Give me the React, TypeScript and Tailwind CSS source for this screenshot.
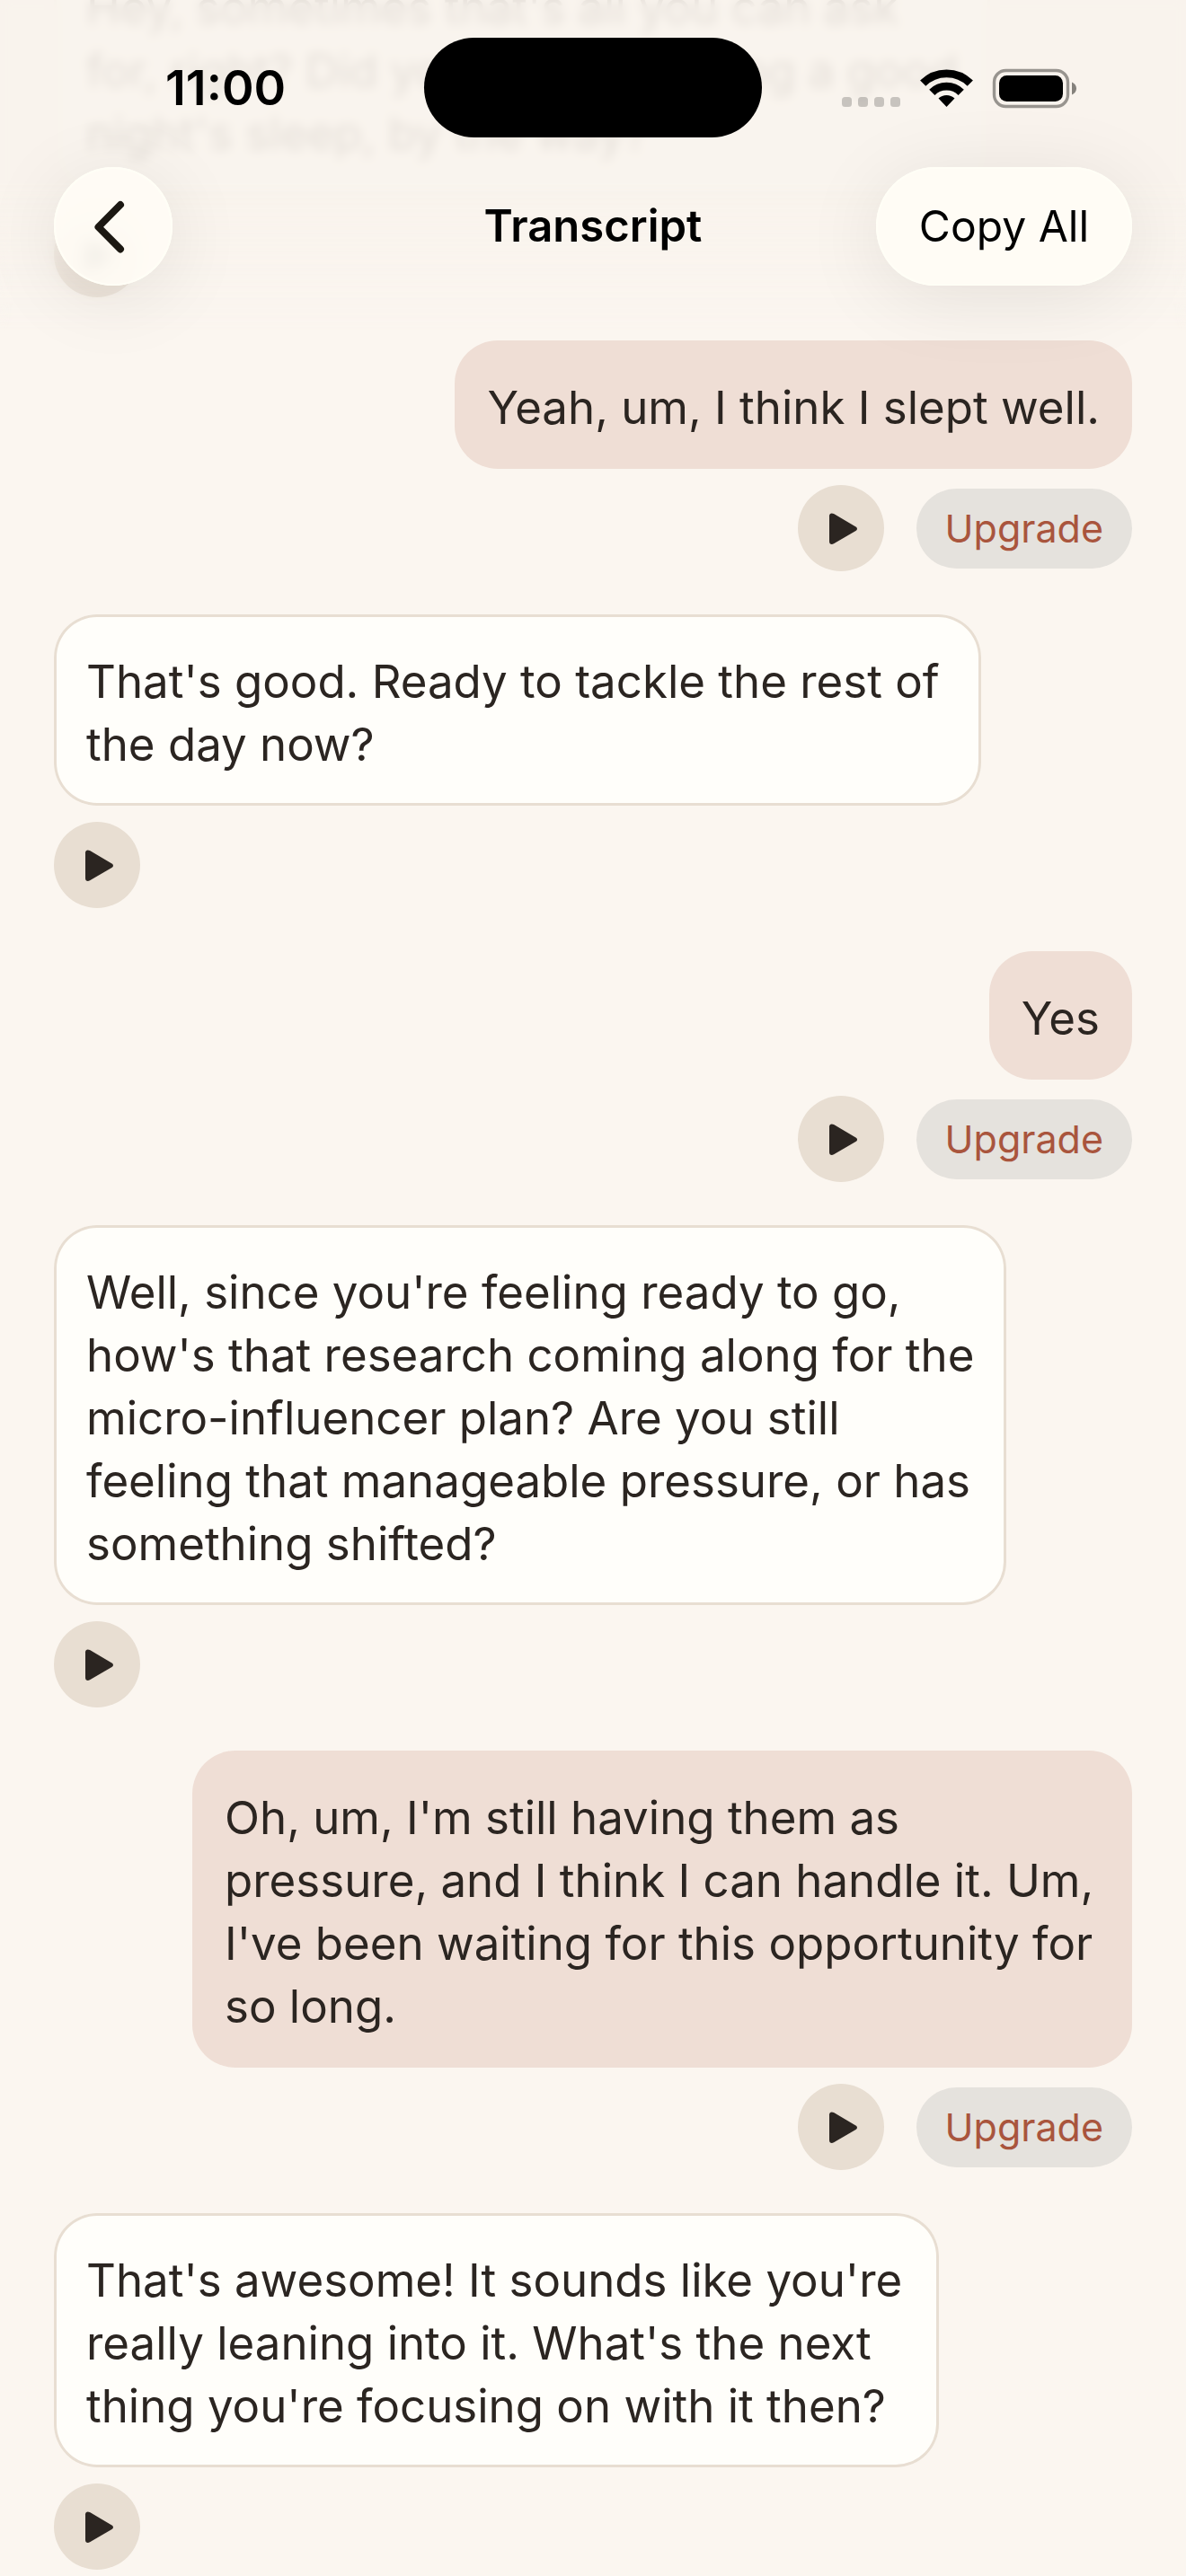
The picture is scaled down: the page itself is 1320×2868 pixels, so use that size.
type Message = {
  id: number;
  from: "user" | "coach";
  lines: string[];
  minWidth?: string;
};

const MESSAGES: Message[] = [
  {
    id: 1,
    from: "coach",
    lines: ["Hey, sometimes that's all you can ask", "for, right? Did you end up getting a good", "night's sleep, by the way?"],
  },
  { id: 2, from: "user", lines: ["Yeah, um, I think I slept well."] },
  {
    id: 3,
    from: "coach",
    lines: ["That's good. Ready to tackle the rest of", "the day now?"],
    minWidth: "min-w-[1032px]",
  },
  { id: 4, from: "user", lines: ["Yes"] },
  {
    id: 5,
    from: "coach",
    lines: [
      "Well, since you're feeling ready to go,",
      "how's that research coming along for the",
      "micro-influencer plan? Are you still",
      "feeling that manageable pressure, or has",
      "something shifted?",
    ],
  },
  {
    id: 6,
    from: "user",
    lines: [
      "Oh, um, I'm still having them as",
      "pressure, and I think I can handle it. Um,",
      "I've been waiting for this opportunity for",
      "so long.",
    ],
    minWidth: "min-w-[1046px]",
  },
  {
    id: 7,
    from: "coach",
    lines: ["That's awesome! It sounds like you're", "really leaning into it. What's the next", "thing you're focusing on with it then?"],
    minWidth: "min-w-[985px]",
  },
];

function PlayButton() {
  return (
    <button aria-label="Play" className="size-24 shrink-0 rounded-full bg-[#e8ded2]">
      <svg viewBox="0 0 96 96" className="size-24" fill="#2b2521">
        <path d="M35 34.5c0-2.900 2.500-3.800 5-2.400l24.500 14.300c2 1.200 2 3.400 0 4.600L40 65.300c-2.500 1.400-5 .5-5-2.400z" />
      </svg>
    </button>
  );
}

function MessageItem({ message }: { message: Message }) {
  const isUser = message.from === "user";
  return (
    <li className={`flex flex-col gap-[18px] ${isUser ? "items-end" : "items-start"}`}>
      <p
        className={`w-fit whitespace-pre-line rounded-[48px] px-9 pt-10 pb-[33px] text-[51px] leading-[70px] text-[#2b2521] ${
          isUser ? "bg-[#efded5]" : "bg-[#fffefa] inset-ring-3 inset-ring-[#e8ded2]"
        } ${message.minWidth ?? ""}`}
      >
        {message.lines.join("\n")}
      </p>
      <div className="flex items-center gap-9">
        <PlayButton />
        {isUser && (
          <button className="h-[89px] rounded-full bg-[#e5e2dd] px-8 text-[43px] text-[#a9553d]">Upgrade</button>
        )}
      </div>
    </li>
  );
}

function StatusIcons() {
  return (
    <svg viewBox="0 0 264 48" className="h-12 w-[264px]" aria-hidden="true">
      <g fill="#000" fillOpacity="0.2">
        <rect x="1" y="34" width="11" height="11" rx="3.500" />
        <rect x="19" y="34" width="11" height="11" rx="3.500" />
        <rect x="37" y="34" width="11" height="11" rx="3.500" />
        <rect x="55" y="34" width="11" height="11" rx="3.500" />
      </g>
      <g fill="none" stroke="#000" strokeWidth="8.800">
        <path d="M91.200 18.700a37.200 37.200 0 0 1 52.600 0" />
        <path d="M101.300 28.800a22.900 22.900 0 0 1 32.400 0" />
      </g>
      <path d="M117.500 45l-9-9.400a13 13 0 0 1 18 0z" />
      <rect x="170.500" y="4.500" width="82" height="40" rx="13" fill="none" stroke="#98948f" strokeWidth="3.400" />
      <rect x="176" y="10" width="71" height="29" rx="8.500" />
      <path d="M257 17.500c3 1.200 5 3.800 5 7s-2 5.800-5 7z" fill="#85817c" />
    </svg>
  );
}

function Header() {
  return (
    <header className="absolute inset-x-0 top-0 text-black">
      <div className="grid grid-cols-[1fr_376px_1fr] items-center pt-[42px]">
        <time className="pl-[184px] text-[54px] leading-none font-semibold">11:00</time>
        <div className="h-[111px] rounded-full bg-black" />
        <div className="flex justify-end pr-[120px]">
          <StatusIcons />
        </div>
      </div>
      <nav className="grid grid-cols-[1fr_auto_1fr] items-center px-[60px] pt-[33px]">
        <button
          aria-label="Back"
          className="size-[132px] rounded-full bg-[#fffcf5]/90 shadow-[0_12px_90px_rgba(0,0,0,0.09)] inset-ring-2 inset-ring-[#fffef6] backdrop-blur-[8px]"
        >
          <svg viewBox="0 0 132 132" fill="none" stroke="#1c1812" strokeWidth="8" strokeLinecap="round" strokeLinejoin="round">
            <path d="M74 42L49.500 66.700l24.500 24.700" />
          </svg>
        </button>
        <h1 className="text-[49px] font-semibold">Transcript</h1>
        <button className="h-[132px] justify-self-end rounded-full bg-[#fffcf5] px-12 text-[48px] shadow-[0_12px_90px_rgba(0,0,0,0.09)] inset-ring-2 inset-ring-[#fffef6]">
          Copy All
        </button>
      </nav>
    </header>
  );
}

export default function App() {
  return (
    <div className="relative min-h-screen overflow-hidden bg-[#fbf6f0] font-[Inter,sans-serif]">
      <ul className="-mt-[66px] flex flex-col gap-12 px-[60px] pb-1">
        {MESSAGES.map((m) => (
          <MessageItem key={m.id} message={m} />
        ))}
      </ul>
      <div className="absolute inset-x-0 top-0 h-[380px] bg-[#f8f3ec]/90 mask-[linear-gradient(to_bottom,black_200px,transparent_370px)] backdrop-blur-[6px]" />
      <Header />
    </div>
  );
}
